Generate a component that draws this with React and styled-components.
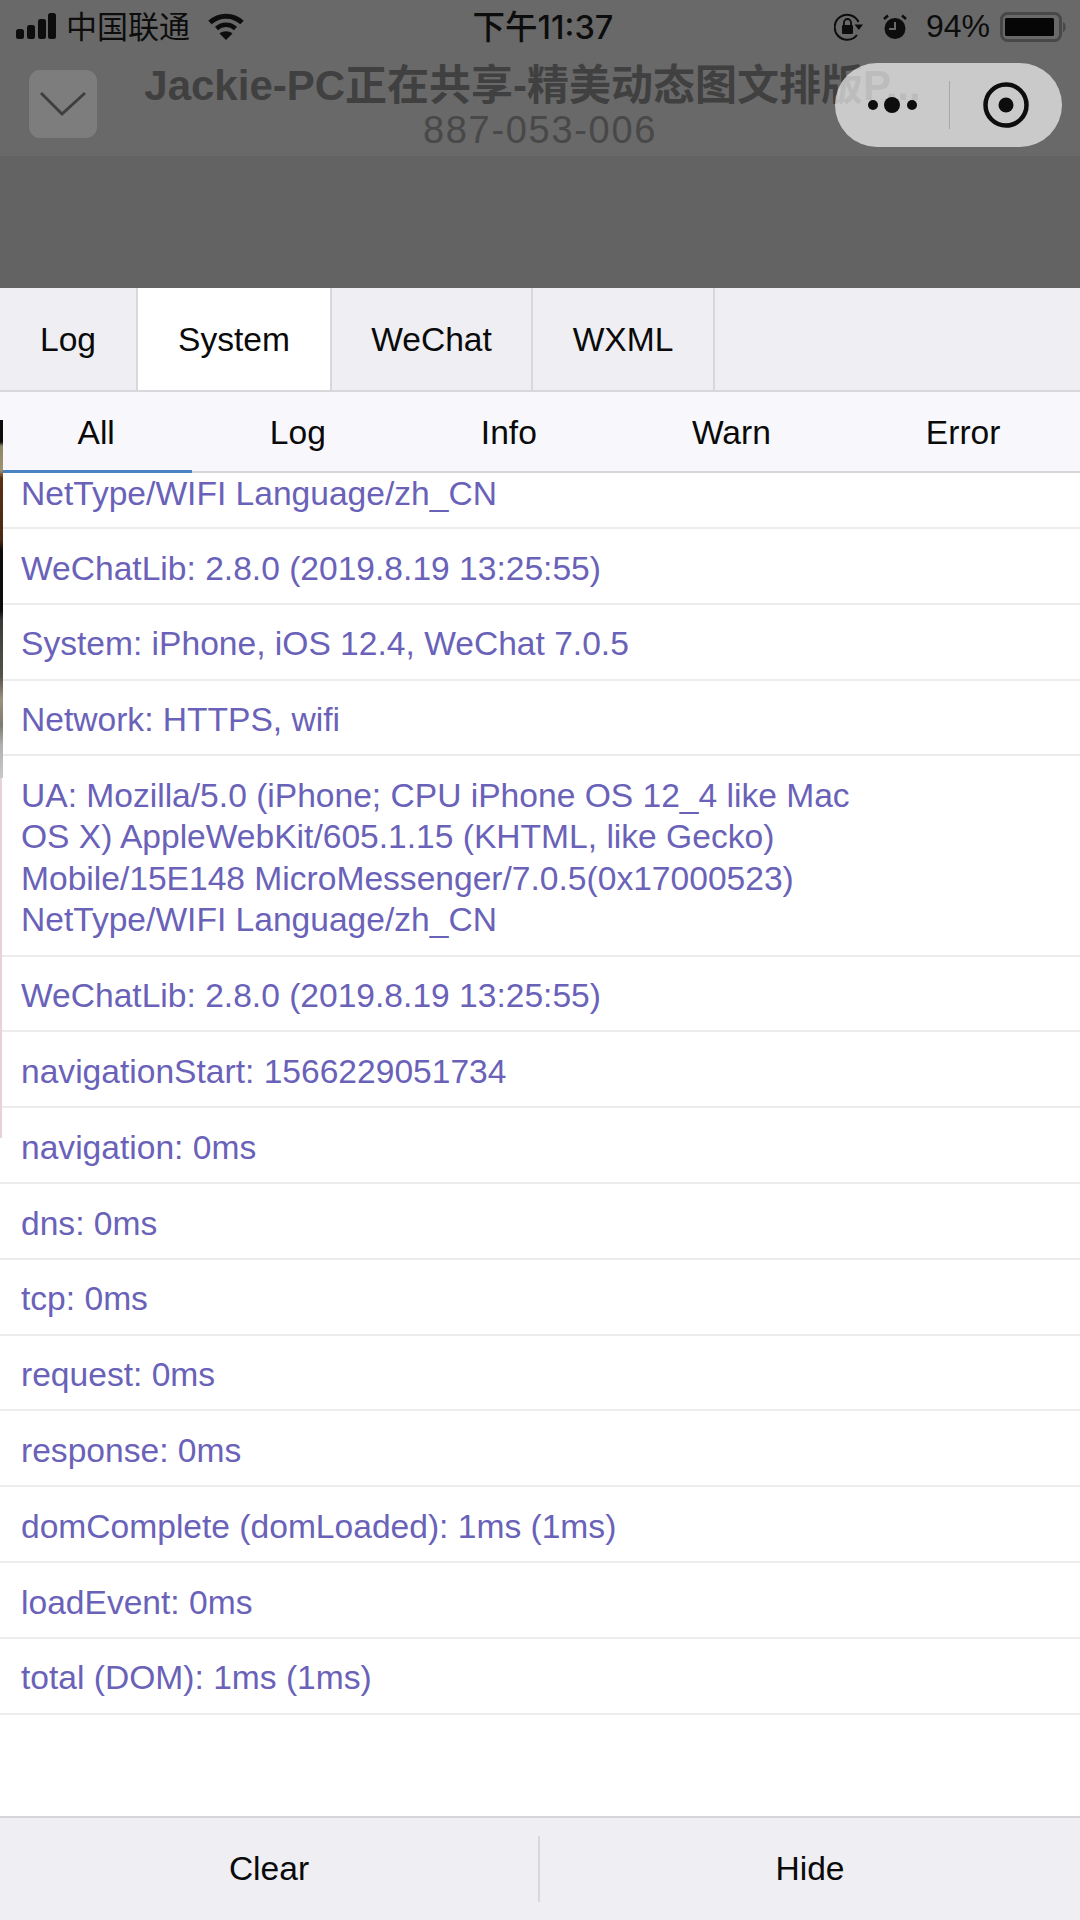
import React from 'react';
import styled, { createGlobalStyle } from 'styled-components';

const GlobalStyle = createGlobalStyle`
  html, body {
    margin: 0;
    padding: 0;
    background: #fff;
  }
  * {
    box-sizing: border-box;
  }
`;

const SANS = `"Liberation Sans", "Noto Sans CJK SC", Arial, sans-serif`;

const Screen = styled.div`
  position: relative;
  width: 1080px;
  height: 1920px;
  display: flex;
  flex-direction: column;
  overflow: hidden;
  font-family: ${SANS};
  background: #fff;
`;

const Backdrop = styled.div`
  height: 288px;
  flex: none;
  background: linear-gradient(#696969 0, #696969 156px, #636363 156px, #636363 100%);
`;

const StatusBar = styled.div`
  height: 54px;
  display: grid;
  grid-template-columns: 1fr auto 1fr;
  align-items: center;
  padding: 0 13px 0 15px;
  color: #0d0d0d;
`;

const StatusLeft = styled.div`
  display: flex;
  align-items: center;
  font-size: 31px;
`;

const Carrier = styled.span`
  margin: 0 18px 0 9px;
  padding-bottom: 5px;
`;

const Clock = styled.div`
  margin-left: 4px;
  padding-bottom: 6px;
  font-family: Inter, "Noto Sans CJK SC", sans-serif;
  font-size: 32.5px;
  font-weight: 500;
`;

const StatusRight = styled.div`
  display: flex;
  align-items: center;
  justify-content: flex-end;
  font-size: 32px;
`;

const Percent = styled.span`
  margin: 0 10px 0 18px;
  padding-bottom: 2px;
`;

const NavBar = styled.div`
  position: relative;
  height: 102px;
`;

const BackButton = styled.div`
  position: absolute;
  left: 29px;
  top: 16px;
  width: 68px;
  height: 68px;
  border-radius: 11px;
  background: #7d7d7d;
  display: flex;
  align-items: center;
  justify-content: center;
`;

const Title = styled.div`
  padding-top: 9px;
  text-align: center;
  color: #404040;
`;

const TitleMain = styled.div`
  margin-left: -15px;
  font-size: 42px;
  line-height: 46px;
  font-weight: 700;
  white-space: nowrap;
`;

const TitleSub = styled.div`
  font-size: 38px;
  line-height: 42px;
  letter-spacing: 1.7px;
  color: #484848;
`;

const Capsule = styled.div`
  position: absolute;
  right: 18px;
  top: 9px;
  width: 227px;
  height: 84px;
  border-radius: 42px;
  background: rgba(255, 255, 255, 0.65);
  display: flex;
  align-items: center;
`;

const CapsulePart = styled.div`
  flex: 1;
  height: 48px;
  display: flex;
  align-items: center;
  justify-content: center;
  padding-left: ${props => props.$pad || 0}px;
  border-left: ${props => (props.$divided ? '1px solid #a8a8a8' : 'none')};
`;

const TabBar = styled.div`
  height: 104px;
  flex: none;
  display: flex;
  background: #eeeef3;
  border-bottom: 2px solid #d8d8dc;
`;

const Tab = styled.div`
  width: ${props => props.$width}px;
  padding-top: 2px;
  display: flex;
  align-items: center;
  justify-content: center;
  font-size: 33.6px;
  color: #0a0a0a;
  background: ${props => (props.$active ? '#fff' : 'transparent')};
  border-right: 2px solid #d8d8dc;
`;

const SubTabBar = styled.div`
  height: 81px;
  flex: none;
  display: flex;
  justify-content: flex-start;
  background: #f8f8fc;
  border-bottom: 2px solid #d6d6da;
`;

const SubTab = styled.div`
  position: relative;
  padding: 2px 77.5px 0;
  display: flex;
  align-items: center;
  font-size: 33.6px;
  color: #0a0a0a;

  &::after {
    content: '';
    display: ${props => (props.$active ? 'block' : 'none')};
    position: absolute;
    left: 3px;
    right: 0;
    bottom: -2px;
    height: 3px;
    background: #4a83c4;
  }
`;

const LogList = styled.div`
  flex: 1;
  min-height: 0;
  display: flex;
  flex-direction: column;
`;

const LogRow = styled.div`
  padding: ${props => (props.$clipped ? '0 21px 12.5px' : '18.5px 21px 13.8px')};
  border-bottom: 2px solid #ececec;
  font-size: 33.6px;
  line-height: 41.5px;
  color: #6a62b8;
  white-space: pre-line;
`;

const Footer = styled.div`
  height: 104px;
  flex: none;
  display: grid;
  grid-template-columns: 538px 1fr;
  align-items: center;
  background: #eeeef3;
  border-top: 2px solid #d6d6da;
`;

const FooterButton = styled.div`
  height: 66px;
  display: flex;
  align-items: center;
  justify-content: center;
  font-size: 33.6px;
  color: #0a0a0a;
  border-left: ${props => (props.$divided ? '2px solid #d8d8dc' : 'none')};
`;

// sliver of whatever sits behind the panel, showing along the left edge
const EdgeStrip = styled.div`
  position: absolute;
  left: 0;
  top: 420px;
  width: 3px;
  height: 358px;
  background: linear-gradient(
    #0c0c0c 0,
    #0c0c0c 22px,
    #8a8468 26px,
    #a09470 50px,
    #5b2f12 58px,
    #4a2a14 120px,
    #0e0c0a 130px,
    #0c0c0c 190px,
    #3c3a36 200px,
    #55524c 256px,
    #9a937e 280px,
    #7d7a70 305px,
    #b0b0ae 325px,
    #c8c8c6 100%
  );
`;

const PinkEdge = styled.div`
  position: absolute;
  left: 0;
  top: 778px;
  width: 2px;
  height: 360px;
  background: #e8d2d6;
`;

const SignalIcon = () => (
  <svg width="42" height="28" viewBox="0 0 42 28" style={{ marginTop: -2 }}>
    <rect x="1" y="17" width="8" height="10" rx="2.5" fill="#0d0d0d" />
    <rect x="12" y="13" width="8" height="14" rx="2.5" fill="#0d0d0d" />
    <rect x="23" y="7" width="8" height="20" rx="2.5" fill="#0d0d0d" />
    <rect x="33" y="1" width="8" height="26" rx="2.5" fill="#0d0d0d" />
  </svg>
);

const WifiIcon = () => (
  <svg width="36" height="28" viewBox="0 0 36 28" fill="none">
    <path d="M2 9.5 C11 1 25 1 34 9.5" stroke="#0d0d0d" strokeWidth="5" />
    <path d="M8.5 15.5 C14 10.5 22 10.5 27.5 15.5" stroke="#0d0d0d" strokeWidth="4.5" />
    <path d="M18 27 L11.5 20.5 C15 17.5 21 17.5 24.5 20.5 Z" fill="#0d0d0d" />
  </svg>
);

const RotationIcon = () => (
  <svg width="30" height="28" viewBox="0 0 30 28" fill="none">
    <path d="M23 22 A12.5 12.5 0 1 1 24.5 9" stroke="#0d0d0d" strokeWidth="2" />
    <path d="M20.5 11.5 L29 11.5 L24.8 17 Z" fill="#0d0d0d" />
    <rect x="8" y="12" width="11" height="9" rx="1" fill="#0d0d0d" />
    <path d="M10 12 V9.5 A3.5 3.5 0 0 1 17 9.5 V12" stroke="#0d0d0d" strokeWidth="1.8" />
  </svg>
);

const AlarmIcon = () => (
  <svg width="26" height="26" viewBox="0 0 26 26" style={{ marginLeft: 18 }}>
    <circle cx="13" cy="14.5" r="10.5" fill="#0d0d0d" />
    <path d="M13 8 V15 H7" stroke="#696969" strokeWidth="2" fill="none" />
    <path d="M2 5 L6 1.5 M24 5 L20 1.5" stroke="#0d0d0d" strokeWidth="2.5" />
  </svg>
);

const BatteryIcon = () => (
  <svg width="67" height="30" viewBox="0 0 67 30">
    <rect x="1.5" y="1.5" width="59" height="27" rx="6" fill="none" stroke="#484848" strokeWidth="3" />
    <rect x="5" y="6" width="49" height="18" rx="1.5" fill="#060606" />
    <path d="M63 10 C66.5 11 66.5 19 63 20 Z" fill="#484848" />
  </svg>
);

const ChevronIcon = () => (
  <svg width="48" height="28" viewBox="0 0 48 28" fill="none">
    <path d="M2 3 L23 24 L46 3" stroke="#3f3f3f" strokeWidth="3" />
  </svg>
);

const DotsIcon = () => (
  <svg width="50" height="20" viewBox="0 0 50 20">
    <circle cx="5" cy="10" r="5" fill="#0d0d0d" />
    <circle cx="24" cy="10" r="8" fill="#0d0d0d" />
    <circle cx="44" cy="10" r="5" fill="#0d0d0d" />
  </svg>
);

const RecordIcon = () => (
  <svg width="46" height="46" viewBox="0 0 46 46" fill="none">
    <circle cx="23" cy="23" r="20.5" stroke="#0d0d0d" strokeWidth="4.5" />
    <circle cx="23" cy="23" r="7.5" fill="#0d0d0d" />
  </svg>
);

const tabs = [
  { label: 'Log', width: 138 },
  { label: 'System', width: 194, active: true },
  { label: 'WeChat', width: 201 },
  { label: 'WXML', width: 182 },
];

const subTabs = ['All', 'Log', 'Info', 'Warn', 'Error'];

const logRows = [
  { text: 'NetType/WIFI Language/zh_CN', clipped: true },
  { text: 'WeChatLib: 2.8.0 (2019.8.19 13:25:55)' },
  { text: 'System: iPhone, iOS 12.4, WeChat 7.0.5' },
  { text: 'Network: HTTPS, wifi' },
  { text: 'UA: Mozilla/5.0 (iPhone; CPU iPhone OS 12_4 like Mac\nOS X) AppleWebKit/605.1.15 (KHTML, like Gecko)\nMobile/15E148 MicroMessenger/7.0.5(0x17000523)\nNetType/WIFI Language/zh_CN' },
  { text: 'WeChatLib: 2.8.0 (2019.8.19 13:25:55)' },
  { text: 'navigationStart: 1566229051734' },
  { text: 'navigation: 0ms' },
  { text: 'dns: 0ms' },
  { text: 'tcp: 0ms' },
  { text: 'request: 0ms' },
  { text: 'response: 0ms' },
  { text: 'domComplete (domLoaded): 1ms (1ms)' },
  { text: 'loadEvent: 0ms' },
  { text: 'total (DOM): 1ms (1ms)' },
];

const App = () => (
  <Screen>
    <GlobalStyle />
    <Backdrop>
      <StatusBar>
        <StatusLeft>
          <SignalIcon />
          <Carrier>中国联通</Carrier>
          <WifiIcon />
        </StatusLeft>
        <Clock>下午11:37</Clock>
        <StatusRight>
          <RotationIcon />
          <AlarmIcon />
          <Percent>94%</Percent>
          <BatteryIcon />
        </StatusRight>
      </StatusBar>
      <NavBar>
        <BackButton>
          <ChevronIcon />
        </BackButton>
        <Title>
          <TitleMain>Jackie-PC正在共享-精美动态图文排版P...</TitleMain>
          <TitleSub>887-053-006</TitleSub>
        </Title>
        <Capsule>
          <CapsulePart $pad={2}>
            <DotsIcon />
          </CapsulePart>
          <CapsulePart $divided>
            <RecordIcon />
          </CapsulePart>
        </Capsule>
      </NavBar>
    </Backdrop>
    <TabBar>
      {tabs.map(tab => (
        <Tab key={tab.label} $width={tab.width} $active={tab.active}>{tab.label}</Tab>
      ))}
    </TabBar>
    <SubTabBar>
      {subTabs.map((label, index) => (
        <SubTab key={label} $active={index === 0}>{label}</SubTab>
      ))}
    </SubTabBar>
    <LogList>
      {logRows.map((row, index) => (
        <LogRow key={index} $clipped={row.clipped}>{row.text}</LogRow>
      ))}
    </LogList>
    <Footer>
      <FooterButton>Clear</FooterButton>
      <FooterButton $divided>Hide</FooterButton>
    </Footer>
    <EdgeStrip />
    <PinkEdge />
  </Screen>
);

export default App;
